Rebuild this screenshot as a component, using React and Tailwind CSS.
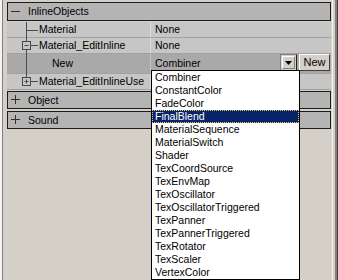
import React from "react";

const LINE = "#4a4a4a";

function HeaderBar({ label, open, className = "" }) {
  return (
    <div className={"flex items-center h-[18px] border border-[#1c1c1c] bg-[#b4b4b4] " + className}>
      <svg width="12" height="12" viewBox="0 0 12 12" className="ml-[3px] shrink-0">
        <line x1="0" y1="5.5" x2="9" y2="5.5" stroke="#303030" strokeWidth="1" />
        {!open && <line x1="4.5" y1="1" x2="4.5" y2="10" stroke="#303030" strokeWidth="1" />}
      </svg>
      <span className="ml-[5px] text-black">{label}</span>
    </div>
  );
}

function TreeSvg({ kind, h }) {
  return (
    <svg
      className="absolute left-0 top-0 overflow-visible"
      width="34"
      height={h}
      viewBox={`0 0 34 ${h}`}
    >
      {kind === "leaf" && (
        <>
          <line x1="19.5" y1="0" x2="19.5" y2={h + 1} stroke={LINE} />
          <line x1="19.5" y1="8.5" x2="31" y2="8.5" stroke={LINE} />
        </>
      )}
      {kind === "open" && (
        <>
          <line x1="19.5" y1="0" x2="19.5" y2="3" stroke={LINE} />
          <rect x="15.5" y="3.5" width="8" height="8" fill="none" stroke={LINE} />
          <line x1="17.5" y1="7.5" x2="21.5" y2="7.5" stroke={LINE} />
          <line x1="23.5" y1="7.5" x2="31" y2="7.5" stroke={LINE} />
          <line x1="19.5" y1="12" x2="19.5" y2={h + 1} stroke={LINE} />
        </>
      )}
      {kind === "pass" && <line x1="19.5" y1="0" x2="19.5" y2={h + 1} stroke={LINE} />}
      {kind === "closed" && (
        <>
          <line x1="19.5" y1="0" x2="19.5" y2="3" stroke={LINE} />
          <rect x="15.5" y="3.5" width="8" height="8" fill="none" stroke={LINE} />
          <line x1="17.5" y1="7.5" x2="21.5" y2="7.5" stroke={LINE} />
          <line x1="19.5" y1="5.5" x2="19.5" y2="9.5" stroke={LINE} />
          <line x1="23.5" y1="7.5" x2="31" y2="7.5" stroke={LINE} />
        </>
      )}
    </svg>
  );
}

function Row({ name, value, kind, indent = 32 }) {
  return (
    <div className="flex h-[16px] border-b border-[#a2a2a2] bg-[#c6c6c6]">
      <div className="relative w-[143px] shrink-0 flex items-center">
        <TreeSvg kind={kind} h={15} />
        <span style={{ paddingLeft: indent }} className="whitespace-nowrap">{name}</span>
      </div>
      <div className="flex-1 border-l border-[#dcdcdc] pl-[4px] flex items-center">{value}</div>
    </div>
  );
}

const items = [
  "Combiner",
  "ConstantColor",
  "FadeColor",
  "FinalBlend",
  "MaterialSequence",
  "MaterialSwitch",
  "Shader",
  "TexCoordSource",
  "TexEnvMap",
  "TexOscillator",
  "TexOscillatorTriggered",
  "TexPanner",
  "TexPannerTriggered",
  "TexRotator",
  "TexScaler",
  "VertexColor",
];

export default function App() {
  return (
    <div
      className="relative w-[338px] h-[280px] bg-[#d4d0c8] flex overflow-hidden text-[10.5px] text-black leading-none"
      style={{ fontFamily: '"Liberation Sans", Arial, sans-serif' }}
    >
      {/* left frame */}
      <div className="w-[2px] bg-[#f4f4f4]" />
      <div className="w-[1px] bg-[#808080]" />
      <div className="w-[4px]" />

      {/* content */}
      <div className="w-[324px] flex flex-col pt-[2px]">
        <HeaderBar label="InlineObjects" open className="h-[19px]" />
        <div className="mt-[1px]">
          <Row name="Material" value="None" kind="leaf" />
          <Row name="Material_EditInline" value="None" kind="open" />
          <div className="flex h-[20px] border-b border-[#a2a2a2] bg-[#a9a9a9]">
            <div className="relative w-[143px] shrink-0 flex items-center">
              <TreeSvg kind="pass" h={19} />
              <span className="pl-[45px]">New</span>
            </div>
            <div className="flex-1 border-l border-[#c4c4c4] pl-[4px] flex">
              <span className="self-center flex-1">Combiner</span>
              <div className="w-[17px] h-[17px] flex items-center justify-center border border-t-[#808080] border-l-[#808080] border-r-[#202020] border-b-[#202020] bg-[#d4d0c8]">
                <div className="w-[13px] h-[13px] border border-t-white border-l-white border-r-[#808080] border-b-[#808080] flex items-center justify-center">
                  <svg width="7" height="4" viewBox="0 0 7 4">
                    <polygon points="0,0 7,0 3.5,4" fill="#000" />
                  </svg>
                </div>
              </div>
              <div className="ml-[2px] mr-[1px] w-[31px] h-[17px] flex items-center justify-center border border-t-white border-l-white border-r-[#404040] border-b-[#404040] bg-[#d4d0c8] text-[11px]">
                New
              </div>
            </div>
          </div>
          <Row name="Material_EditInlineUse" value="" kind="closed" />
        </div>
        <HeaderBar label="Object" className="mt-[1px]" />
        <HeaderBar label="Sound" className="mt-[2px]" />
      </div>

      {/* right frame */}
      <div className="w-[1px]" />
      <div className="w-[1px] bg-[#f4f4f4]" />
      <div className="w-[2px]" />
      <div className="w-[2px] bg-[#808080]" />
      <div className="w-[1px] bg-[#404040]" />

      {/* dropdown list */}
      <div className="absolute left-[151px] top-[70px] w-[149px] h-[210px] border border-black bg-white flex flex-col">
        {items.map((it) =>
          it === "FinalBlend" ? (
            <div
              key={it}
              className="h-[13px] shrink-0 flex items-center pl-[2px] bg-[#0a246a] text-white border border-dotted border-[#e8d060]"
            >
              {it}
            </div>
          ) : (
            <div key={it} className="h-[13px] shrink-0 flex items-center pl-[3px]">
              {it}
            </div>
          )
        )}
      </div>
    </div>
  );
}
